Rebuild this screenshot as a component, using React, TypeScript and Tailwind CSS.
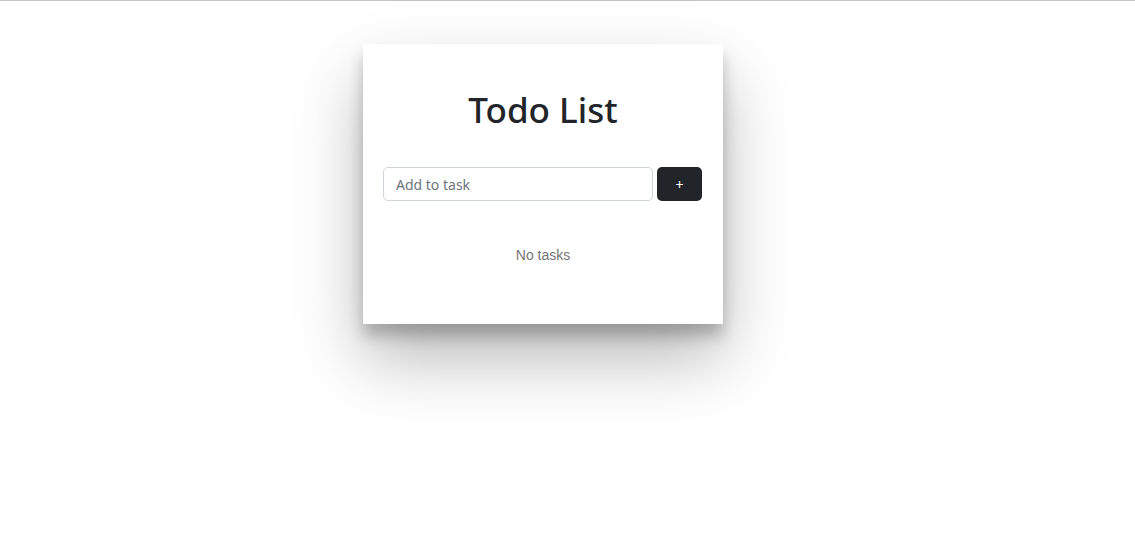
export default function App() {
  return (
    <div className="min-h-[535px] w-full bg-white border-t border-[#c4c4c4]">
      <div className="flex justify-center pt-[43px] pr-[49px]">
        <div className="w-[360px] h-[280px] bg-white px-5 pt-[42px] flex flex-col shadow-[0_34px_64px_rgba(0,0,0,0.28),0_12px_14px_rgba(0,0,0,0.22)]">
          <h1 className="text-center text-[35px] leading-[48px] font-medium text-[#212529] font-['Noto_Sans','Open_Sans',sans-serif]">
            Todo List
          </h1>
          <div className="flex gap-1 mt-[33px]">
            <input
              type="text"
              placeholder="Add to task"
              className="w-[270px] h-[34px] border border-[#ced4da] rounded-[5px] px-3 text-[14px] text-[#212529] placeholder:text-[#6c757d] outline-none font-['Noto_Sans','Open_Sans',sans-serif]"
            />
            <button className="w-[45px] h-[34px] rounded-[5px] bg-[#212529] text-white text-[14px] flex items-center justify-center font-['Noto_Sans',sans-serif]">
              +
            </button>
          </div>
          <p className="mt-[44px] text-center text-[14px] leading-[20px] text-[#757575] font-['Liberation_Sans',Arial,sans-serif]">
            No tasks
          </p>
        </div>
      </div>
    </div>
  );
}
